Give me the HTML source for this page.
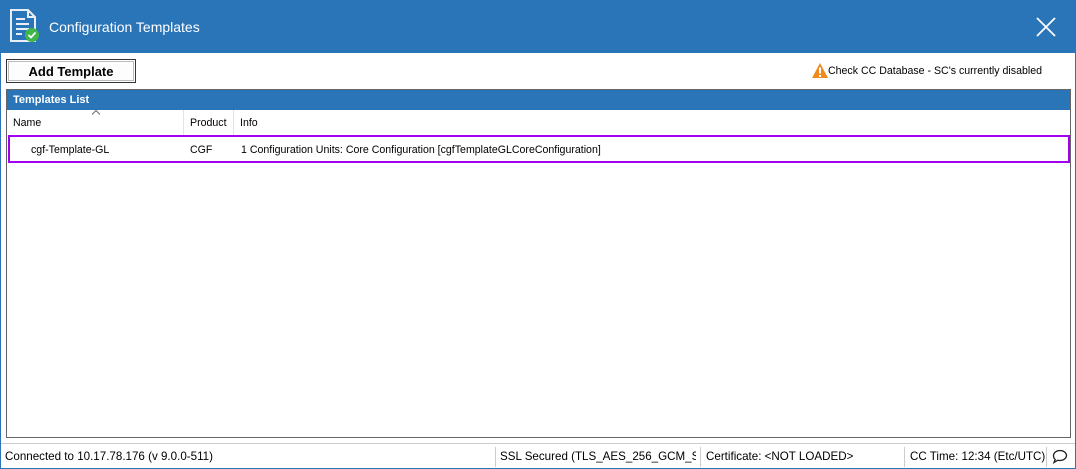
<!DOCTYPE html>
<html><head><meta charset="utf-8"><style>
*{box-sizing:border-box;margin:0;padding:0}
body{width:1076px;height:469px;overflow:hidden;background:#fff;font-family:"Liberation Sans",Arial,sans-serif;font-size:10.6px;color:#000;position:relative}
.win{position:absolute;left:0;top:0;width:1076px;height:469px;border:1px solid #2b74b8;border-top:none}
.title{position:absolute;left:0;top:0;width:1076px;height:53px;background:#2a74b8;color:#fff}
.title .t{position:absolute;left:49px;top:19px;font-size:14px}
.btn{position:absolute;left:6px;top:59px;width:130px;height:24px;border:1px solid #333;background:#fff}
.btn div{position:absolute;inset:1px;border:1px solid #bbb;background:#fdfdfd;text-align:center;font-weight:bold;font-size:13px;line-height:19px}
.warn{position:absolute;left:828px;top:65px;font-size:10.6px}
.list{position:absolute;left:6px;top:89px;width:1065px;height:349px;border:1px solid #666}
.lh{position:absolute;left:0;top:0;width:100%;height:20px;background:#2a74b8;color:#fff;font-weight:bold;font-size:11px;line-height:20px;padding-left:6px}
.ch{position:absolute;top:20px;height:25px;line-height:27px;border-right:1px solid #e3e3e3;padding-left:6px}
.row{position:absolute;left:1px;top:45px;width:1062px;height:28px;border:2px solid #a400f0}
.row span{position:absolute;top:7px}
.sb{position:absolute;left:1px;top:443px;width:1074px;height:25px;border-top:1px solid #ccc;font-size:11.6px}
.sb span{position:absolute;top:6px}
.sep{position:absolute;top:3px;width:1px;height:20px;background:#ccc}
</style></head><body>
<div class="win"></div>
<div class="title">
<svg style="position:absolute;left:9px;top:9px" width="32" height="34" viewBox="0 0 32 34">
<path d="M2 1h17l7 7v24H2z" fill="none" stroke="#e8eef6" stroke-width="2"/>
<path d="M19 1v7h7" fill="none" stroke="#e8eef6" stroke-width="2"/>
<path d="M7 10h9M7 15h13M7 20h13M7 25h6" stroke="#e8eef6" stroke-width="2"/>
<circle cx="23" cy="26" r="7" fill="#3fb54a"/>
<path d="M19.5 26l2.5 2.5 4.5-5" fill="none" stroke="#fff" stroke-width="1.8"/>
</svg>
<div class="t">Configuration Templates</div>
<svg style="position:absolute;left:1036px;top:17px" width="20" height="20"><path d="M1 1L19 19M19 1L1 19" stroke="#fff" stroke-width="1.8"/></svg>
</div>
<div class="btn"><div>Add Template</div></div>
<svg style="position:absolute;left:812px;top:63px" width="16" height="15" viewBox="0 0 16 15"><path d="M8 0L16 15H0z" fill="#f08a1c"/><path d="M8 4.5v6" stroke="#fff" stroke-width="2"/><rect x="7" y="12" width="2" height="2" fill="#fff"/></svg>
<div class="warn">Check CC Database - SC's currently disabled</div>
<div class="list">
<div class="lh">Templates List</div>
<svg style="position:absolute;left:85px;top:20px" width="8" height="5"><path d="M0 4.5L4 .5 8 4.5" fill="none" stroke="#666"/></svg>
<div class="ch" style="left:0;width:177px">Name</div>
<div class="ch" style="left:177px;width:50px">Product</div>
<div class="ch" style="left:227px;width:400px;border:none">Info</div>
<div class="row"><span style="left:21px">cgf-Template-GL</span><span style="left:180px">CGF</span><span style="left:231px">1 Configuration Units: Core Configuration [cgfTemplateGLCoreConfiguration]</span></div>
</div>
<div class="sb">
<span style="left:4px">Connected to 10.17.78.176 (v 9.0.0-511)</span>
<div class="sep" style="left:494px"></div>
<span style="left:499px;width:196px;overflow:hidden;white-space:nowrap">SSL Secured (TLS_AES_256_GCM_SHA384)</span>
<div class="sep" style="left:699px"></div>
<span style="left:705px">Certificate: &lt;NOT LOADED&gt;</span>
<div class="sep" style="left:903px"></div>
<span style="left:909px">CC Time: 12:34 (Etc/UTC)</span>
<div class="sep" style="left:1045px"></div>
<svg style="position:absolute;left:1051px;top:5px" width="16" height="15" viewBox="0 0 16 15"><path d="M8 1.5c3.6 0 6.5 2.3 6.5 5s-2.9 5-6.5 5c-.8 0-1.5-.1-2.2-.3L2 13.5l1.2-3C2 9.5 1.5 8.1 1.5 6.5c0-2.7 2.9-5 6.5-5z" fill="none" stroke="#222" stroke-width="1.3"/></svg>
</div>
</body></html>
